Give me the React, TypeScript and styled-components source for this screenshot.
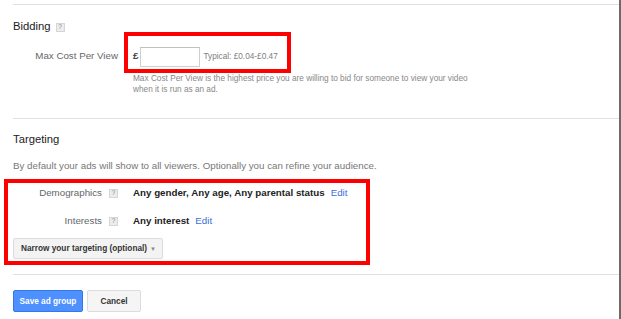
import styled, { createGlobalStyle } from "styled-components";

const GlobalStyle = createGlobalStyle`
  body {
    margin: 0;
    background: #fff;
    font-family: "Liberation Sans", Arial, sans-serif;
  }
`;

// whole panel, with the dark edge on the right
const Page = styled.div`
  position: relative;
  box-sizing: border-box;
  width: 621px;
  height: 319px;
  padding: 4px 0 0 13px;
  border-right: 2px solid #6b6b6b;
  overflow: hidden;
`;

const Section = styled.section<{ $bottom: number }>`
  border-top: 1px solid #e0e0e0;
  padding-bottom: ${(p) => p.$bottom}px;
`;

const HeadingRow = styled.div<{ $top: number }>`
  display: flex;
  align-items: flex-start;
  gap: 5px;
  margin-top: ${(p) => p.$top}px;
`;

const Title = styled.h2`
  margin: 0;
  font-size: 11.25px;
  line-height: 14px;
  font-weight: normal;
  color: #222;
`;

const Help = styled.span<{ $top?: number }>`
  display: inline-flex;
  align-items: center;
  justify-content: center;
  box-sizing: border-box;
  width: 9px;
  height: 9px;
  margin-top: ${(p) => p.$top ?? 0}px;
  background: #ececec;
  border: 1px solid #d6d6d6;
  color: #8a8a8a;
  font-size: 6.5px;
  line-height: 1;
`;

const FieldRow = styled.div`
  display: flex;
  align-items: flex-start;
  gap: 15px;
  margin-top: 14px;
`;

const Label = styled.div`
  display: flex;
  justify-content: flex-end;
  align-items: center;
  gap: 7px;
  width: 105px;
  flex-shrink: 0;
  font-size: 9.75px;
  line-height: 12px;
  color: #666;
`;

const BidLabel = styled(Label)`
  padding-top: 3px;
`;

const Currency = styled.span`
  padding-top: 3px;
  font-size: 9.75px;
  line-height: 12px;
  font-weight: bold;
  color: #444;
  margin-right: 2px;
`;

const BidInput = styled.input`
  box-sizing: border-box;
  width: 60px;
  height: 20px;
  margin: 0;
  border: 1px solid #cfcfcf;
  border-top-color: #c0c0c0;
  outline: none;
`;

const Hint = styled.span`
  padding-top: 4px;
  margin-left: 3px;
  font-size: 8.25px;
  line-height: 11px;
  color: #808080;
`;

const BidField = styled.div`
  display: flex;
  align-items: flex-start;
`;

const Note = styled.p`
  width: 345px;
  margin: 6px 0 0 120px;
  font-size: 8.25px;
  line-height: 11px;
  color: #888;
`;

const Intro = styled.p`
  margin: 14px 0 0;
  font-size: 9.75px;
  line-height: 12px;
  color: #777;
`;

const TargetRow = styled.div<{ $top: number }>`
  display: flex;
  align-items: center;
  gap: 15px;
  margin-top: ${(p) => p.$top}px;
`;

const Value = styled.div`
  font-size: 9.75px;
  line-height: 12px;
  font-weight: bold;
  color: #222;
`;

const EditLink = styled.a`
  margin-left: 6px;
  font-weight: normal;
  color: #3a70d9;
  text-decoration: none;
  cursor: pointer;
`;

const Button = styled.button<{ $primary?: boolean; $width: number }>`
  box-sizing: border-box;
  width: ${(p) => p.$width}px;
  height: 22px;
  padding: 0;
  border-radius: 2px;
  border: 1px solid ${(p) => (p.$primary ? "#3079ed" : "#dcdcdc")};
  background: ${(p) => (p.$primary ? "#4d90fe" : "#f5f5f5")};
  color: ${(p) => (p.$primary ? "#fff" : "#333")};
  font-family: "Liberation Sans", Arial, sans-serif;
  font-size: 8.25px;
  font-weight: bold;
  white-space: nowrap;
  cursor: pointer;
`;

const NarrowButton = styled(Button)`
  display: flex;
  align-items: center;
  justify-content: space-between;
  height: 21px;
  margin-top: 11px;
  padding: 0 6px 0 7px;
  background: #f3f3f3;
`;

const Caret = styled.span`
  color: #888;
  font-size: 6px;
`;

const Actions = styled.div`
  display: flex;
  gap: 4px;
  margin-top: 15px;
`;

// red annotation boxes drawn over the form
const Marker = styled.div<{ $x: number; $y: number; $w: number; $h: number }>`
  position: absolute;
  left: ${(p) => p.$x}px;
  top: ${(p) => p.$y}px;
  width: ${(p) => p.$w}px;
  height: ${(p) => p.$h}px;
  box-sizing: border-box;
  border: 4px solid #f00;
  pointer-events: none;
`;

export default function App() {
  return (
    <>
      <GlobalStyle />
      <Page>
        <Section $bottom={23}>
          <HeadingRow $top={14}>
            <Title>Bidding</Title>
            <Help $top={4}>?</Help>
          </HeadingRow>
          <FieldRow>
            <BidLabel>Max Cost Per View</BidLabel>
            <BidField>
              <Currency>£</Currency>
              <BidInput type="text" />
              <Hint>Typical: £0.04-£0.47</Hint>
            </BidField>
          </FieldRow>
          <Note>
            Max Cost Per View is the highest price you are willing to bid for someone to view your video when
            it is run as an ad.
          </Note>
        </Section>

        <Section $bottom={15}>
          <HeadingRow $top={13}>
            <Title>Targeting</Title>
          </HeadingRow>
          <Intro>By default your ads will show to all viewers. Optionally you can refine your audience.</Intro>
          <TargetRow $top={15}>
            <Label>
              Demographics <Help>?</Help>
            </Label>
            <Value>
              Any gender, Any age, Any parental status
              <EditLink>Edit</EditLink>
            </Value>
          </TargetRow>
          <TargetRow $top={16}>
            <Label>
              Interests <Help>?</Help>
            </Label>
            <Value>
              Any interest
              <EditLink>Edit</EditLink>
            </Value>
          </TargetRow>
          <NarrowButton $width={150}>
            Narrow your targeting (optional)
            <Caret>▼</Caret>
          </NarrowButton>
        </Section>

        <Section $bottom={0}>
          <Actions>
            <Button $primary $width={70}>Save ad group</Button>
            <Button $width={54}>Cancel</Button>
          </Actions>
        </Section>

        <Marker $x={124} $y={32} $w={167} $h={41} />
        <Marker $x={4} $y={179} $w={366} $h={86} />
      </Page>
    </>
  );
}
